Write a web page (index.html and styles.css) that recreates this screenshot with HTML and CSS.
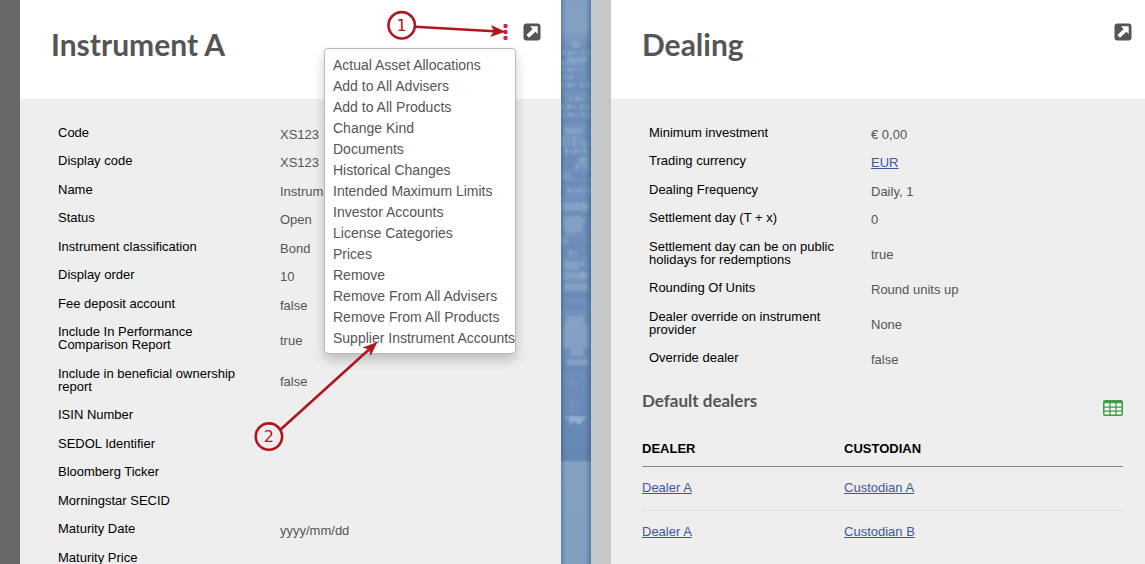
FILE: index.html
```html
<!DOCTYPE html>
<html lang="en">
<head>
<meta charset="UTF-8">
<meta name="viewport" content="width=device-width, initial-scale=1.0">
<title>Instrument A</title>
<link rel="stylesheet" href="styles.css">
</head>
<body>

<div class="page">

    <!-- Instrument -->
    <section class="panel panel-active">
        <header class="panel-header">
            <h1>Instrument A</h1>
            <div class="actions">
                <div class="menu-wrap">
                    <button type="button" class="icon-btn" aria-label="Actions">
                        <svg width="5" height="18" viewBox="0 0 5 18" fill="#d02450">
                            <rect x="0.5" y="1" width="4" height="4" rx="1"/>
                            <rect x="0.5" y="7" width="4" height="4" rx="1"/>
                            <rect x="0.5" y="13" width="4" height="4" rx="1"/>
                        </svg>
                    </button>
                    <ul class="menu">
                        <li><a href="#">Actual Asset Allocations</a></li>
                        <li><a href="#">Add to All Advisers</a></li>
                        <li><a href="#">Add to All Products</a></li>
                        <li><a href="#">Change Kind</a></li>
                        <li><a href="#">Documents</a></li>
                        <li><a href="#">Historical Changes</a></li>
                        <li><a href="#">Intended Maximum Limits</a></li>
                        <li><a href="#">Investor Accounts</a></li>
                        <li><a href="#">License Categories</a></li>
                        <li><a href="#">Prices</a></li>
                        <li><a href="#">Remove</a></li>
                        <li><a href="#">Remove From All Advisers</a></li>
                        <li><a href="#">Remove From All Products</a></li>
                        <li><a href="#">Supplier Instrument Accounts</a></li>
                    </ul>
                </div>
                <button type="button" class="icon-btn" aria-label="Open">
                    <svg width="18" height="18" viewBox="0 0 18 18">
                        <rect x="0.5" y="0.5" width="17" height="17" rx="3" fill="#555"/>
                        <path d="M7 3.3H14.7V11L12.4 8.7L6 14.7L3.4 12.1L9.6 6Z" fill="#fff"/>
                    </svg>
                </button>
            </div>
        </header>
        <div class="panel-body">
            <dl class="fields">
                <div class="field"><dt>Code</dt><dd>XS123</dd></div>
                <div class="field"><dt>Display code</dt><dd>XS123</dd></div>
                <div class="field"><dt>Name</dt><dd>Instrument A</dd></div>
                <div class="field"><dt>Status</dt><dd>Open</dd></div>
                <div class="field"><dt>Instrument classification</dt><dd>Bond</dd></div>
                <div class="field"><dt>Display order</dt><dd>10</dd></div>
                <div class="field"><dt>Fee deposit account</dt><dd>false</dd></div>
                <div class="field"><dt>Include In Performance Comparison Report</dt><dd>true</dd></div>
                <div class="field"><dt>Include in beneficial ownership report</dt><dd>false</dd></div>
                <div class="field"><dt>ISIN Number</dt><dd></dd></div>
                <div class="field"><dt>SEDOL Identifier</dt><dd></dd></div>
                <div class="field"><dt>Bloomberg Ticker</dt><dd></dd></div>
                <div class="field"><dt>Morningstar SECID</dt><dd></dd></div>
                <div class="field"><dt>Maturity Date</dt><dd>yyyy/mm/dd</dd></div>
                <div class="field"><dt>Maturity Price</dt><dd></dd></div>
            </dl>
        </div>
    </section>

    <!-- Backdrop between the panels -->
    <div class="backdrop">
        <svg width="30" height="564" viewBox="0 0 30 564" preserveAspectRatio="none">
            <defs>
                <linearGradient id="sky" x1="0" y1="0" x2="0" y2="1">
                    <stop offset="0" stop-color="#7f9fc3"/>
                    <stop offset="0.05" stop-color="#86a2c3"/>
                    <stop offset="0.08" stop-color="#6f91ba"/>
                    <stop offset="0.3" stop-color="#6a8db8"/>
                    <stop offset="0.6" stop-color="#6d8fb9"/>
                    <stop offset="0.7" stop-color="#6a8bb8"/>
                    <stop offset="0.815" stop-color="#6487b3"/>
                    <stop offset="0.82" stop-color="#83a0c1"/>
                    <stop offset="1" stop-color="#80a0c0"/>
                </linearGradient>
                <linearGradient id="edge" x1="0" y1="0" x2="1" y2="0">
                    <stop offset="0" stop-color="#27496f" stop-opacity="0.35"/>
                    <stop offset="0.16" stop-color="#27496f" stop-opacity="0"/>
                    <stop offset="0.8" stop-color="#27496f" stop-opacity="0"/>
                    <stop offset="1" stop-color="#27496f" stop-opacity="0.4"/>
                </linearGradient>
                <filter id="soft"><feGaussianBlur stdDeviation="0.8"/></filter>
            </defs>
            <rect width="30" height="564" fill="url(#sky)"/>
            <g filter="url(#soft)">
                <g fill="#9fb6d1" opacity="0.45">
                    <rect x="10" y="41" width="10" height="7" rx="2"/>
                    <rect x="6" y="57" width="22" height="4"/>
                    <rect x="2" y="128" width="20" height="6"/>
                    <rect x="17" y="157" width="11" height="7" rx="2"/>
                    <rect x="1" y="203" width="27" height="8"/>
                    <path d="M1 217L17 215L24 219L21 232L8 234L2 230Z"/>
                    <path d="M0 237L9 240L3 243L7 247L0 245Z"/>
                    <rect x="2" y="261" width="16" height="9"/>
                    <rect x="2" y="272" width="24" height="7"/>
                    <rect x="3" y="283" width="24" height="7"/>
                    <rect x="5" y="316" width="18" height="26"/>
                    <rect x="2" y="326" width="26" height="22"/>
                    <rect x="9" y="334" width="13" height="22"/>
                    <rect x="6" y="359" width="22" height="6"/>
                </g>
                <path fill="#a9bfd8" opacity="0.7" d="M3 418L11 416L26 417L21 421L19 425L13 421L8 425L9 420Z"/>
                <g stroke="#a9c0d9" stroke-opacity="0.45" fill="none">
                    <path stroke-width="4" stroke-dasharray="3 3 5 2 2 4" d="M1 53H30M1 70H22M2 77H12M0 85H30M8 99H30M0 107H30M1 115H30"/>
                    <path stroke-width="5" stroke-dasharray="4 2 2 2" d="M0 63H22M1 138H22M1 144H30M3 151H28M14 167H28M2 176H10M6 191H30M8 253H16M19 264H28M19 275H28"/>
                    <path stroke-width="7" stroke-dasharray="2 3" stroke-opacity="0.25" d="M0 203H30M4 324H30"/>
                </g>
                <g stroke="#8ea9ca" stroke-width="1" stroke-opacity="0.6" fill="none">
                    <path d="M0 94H30M0 126H30M0 172H30M0 180H30M0 187H30M0 197H30M0 236H30M0 258H30M0 280H30M0 291H30M0 301H30M0 312H30"/>
                    <path d="M9 380V388M12 379V389M16 379V388M9 400V412M12 400V413M16 401V412"/>
                </g>
                <g stroke="#54789f" stroke-opacity="0.35" fill="none">
                    <path stroke-width="8" stroke-dasharray="1 4" d="M1 296H30M1 306H30"/>
                    <path d="M0 90H30M0 123H30M0 183H30M0 247H30M0 368H30"/>
                </g>
            </g>
            <rect width="30" height="564" fill="url(#edge)"/>
        </svg>
    </div>

    <!-- Dealing -->
    <section class="panel">
        <header class="panel-header">
            <h1>Dealing</h1>
            <div class="actions">
                <button type="button" class="icon-btn" aria-label="Open">
                    <svg width="18" height="18" viewBox="0 0 18 18">
                        <rect x="0.5" y="0.5" width="17" height="17" rx="3" fill="#555"/>
                        <path d="M7 3.3H14.7V11L12.4 8.7L6 14.7L3.4 12.1L9.6 6Z" fill="#fff"/>
                    </svg>
                </button>
            </div>
        </header>
        <div class="panel-body">
            <dl class="fields">
                <div class="field"><dt>Minimum investment</dt><dd>€ 0,00</dd></div>
                <div class="field"><dt>Trading currency</dt><dd><a href="#">EUR</a></dd></div>
                <div class="field"><dt>Dealing Frequency</dt><dd>Daily, 1</dd></div>
                <div class="field"><dt>Settlement day (T + x)</dt><dd>0</dd></div>
                <div class="field"><dt>Settlement day can be on public holidays for redemptions</dt><dd>true</dd></div>
                <div class="field"><dt>Rounding Of Units</dt><dd>Round units up</dd></div>
                <div class="field"><dt>Dealer override on instrument provider</dt><dd>None</dd></div>
                <div class="field"><dt>Override dealer</dt><dd>false</dd></div>
            </dl>

            <div class="sub-header">
                <h2>Default dealers</h2>
                <button type="button" class="icon-btn" aria-label="Export table">
                    <svg width="20" height="16" viewBox="0 0 20 16">
                        <rect x="0.75" y="0.75" width="18.5" height="14.5" rx="1.5" fill="#f4f8f4" stroke="#3f9c46" stroke-width="1.5"/>
                        <path d="M1 2H19" stroke="#3f9c46" stroke-width="2.5"/>
                        <path d="M1 7.2H19M1 11.2H19M7 2V15M13 2V15" stroke="#3f9c46" stroke-width="1.3"/>
                    </svg>
                </button>
            </div>
            <table class="dealers">
                <thead>
                    <tr><th>DEALER</th><th>CUSTODIAN</th></tr>
                </thead>
                <tbody>
                    <tr><td><a href="#">Dealer A</a></td><td><a href="#">Custodian A</a></td></tr>
                    <tr><td><a href="#">Dealer A</a></td><td><a href="#">Custodian B</a></td></tr>
                </tbody>
            </table>
        </div>
    </section>
</div>

<!-- Step markers -->
<svg class="markers" width="560" height="470" viewBox="0 0 560 470">
    <g fill="none" stroke="#b2151f">
        <circle cx="401.7" cy="25.3" r="13.2" stroke-width="2.6"/>
        <path d="M415 26.7L494 31.2" stroke-width="2.6"/>
        <circle cx="268.9" cy="436.6" r="13.2" stroke-width="2.6"/>
        <path d="M279.5 430.5L369 349.5" stroke-width="2.6"/>
    </g>
    <g fill="#b2151f">
        <path d="M505.5 31.7L490 37L494 31.2L491 25Z"/>
        <path d="M377.5 342L370.5 356L369 349.5L362.5 347.5Z"/>
    </g>
    <text x="401.7" y="31" text-anchor="middle">1</text>
    <text x="268.9" y="442" text-anchor="middle">2</text>
</svg>

</body>
</html>
```

FILE: styles.css
```css
/* General Styles */
* {
    margin: 0;
    padding: 0;
    box-sizing: border-box;
}

body {
    position: relative;
    min-height: 100vh;
    overflow: hidden;
    background: #eee;
    color: #555;
    font-family: "Liberation Sans", Arial, sans-serif;
    font-size: 13px;
}

a {
    color: #3b5998;
}

/* Panels */
.page {
    display: flex;
    height: 100vh;
    margin-right: -7px;
}

.panel {
    flex: 1;
    min-width: 0;
    border-left: 20px solid #c6c7c9;
    background: #eee;
}

.panel-active {
    border-left-color: #686868;
}

.panel-header {
    display: flex;
    justify-content: space-between;
    height: 99px;
    padding: 23px 20px 0 31px;
    background: #fff;
}

h1, h2 {
    font-family: Lato, sans-serif;
    font-weight: bold;
}

h1 {
    padding-top: 3px;
    font-size: 30px;
    line-height: 36px;
}

.actions {
    display: flex;
    align-items: flex-start;
    gap: 15px;
}

.icon-btn {
    display: block;
    border: none;
    background: none;
    cursor: pointer;
}

.icon-btn svg {
    display: block;
}

/* Drop-down Menu */
.menu-wrap {
    position: relative;
}

.menu {
    position: absolute;
    top: 25px;
    right: -8px;
    z-index: 1;
    width: 192px;
    padding: 6px 0 4px;
    border: 1px solid #b8b8b8;
    border-radius: 4px;
    background: #fff;
    box-shadow: 0 6px 12px rgba(0, 0, 0, 0.2);
    list-style: none;
}

.menu a {
    display: block;
    padding-left: 8px;
    color: #555;
    font-size: 14px;
    line-height: 21px;
    text-decoration: none;
    white-space: nowrap;
}

/* Backdrop */
.backdrop {
    width: 30px;
}

.backdrop svg {
    display: block;
    width: 100%;
    height: 100%;
}

/* Fields */
.panel-body {
    padding: 19px 29px 0 31px;
}

.fields {
    padding-left: 7px;
}

.field {
    display: flex;
    align-items: center;
    line-height: 13px;
}

.field dt {
    width: 222px;
    padding: 8px 30px 7px 0;
    color: #000;
}

.field:nth-child(even) dt {
    padding-bottom: 8px;
}

.field dd {
    flex: 1;
    padding-top: 4px;
}

/* Dealers */
.sub-header {
    display: flex;
    justify-content: space-between;
    align-items: flex-end;
    padding-top: 18px;
}

h2 {
    padding-bottom: 4px;
    font-size: 17px;
    line-height: 22px;
}

.dealers {
    width: 100%;
    margin-top: 15px;
    border-collapse: collapse;
    line-height: 15px;
    text-align: left;
}

.dealers th {
    padding: 10px 0;
    border-bottom: 1px solid #888;
    color: #000;
}

.dealers th:first-child {
    width: 42%;
}

.dealers td {
    padding: 13px 0 15px;
    border-bottom: 1px solid #ddd;
}

.dealers tr:last-child td {
    border-bottom: none;
}

/* Markers */
.markers {
    position: absolute;
    top: 0;
    left: 0;
    z-index: 2;
    pointer-events: none;
}

.markers text {
    fill: #b2151f;
    font-family: "DejaVu Sans", sans-serif;
    font-size: 16px;
}
```
